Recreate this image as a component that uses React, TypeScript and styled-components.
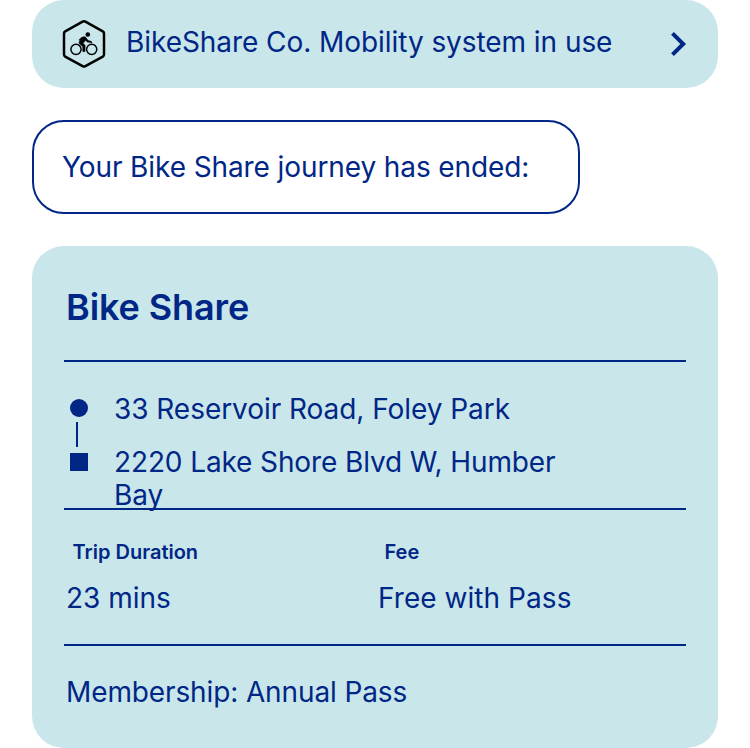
import React from "react";
import styled, { createGlobalStyle } from "styled-components";

const navy = "#002686";
const ice = "#c9e6eb";

const GlobalStyle = createGlobalStyle`
  *, *::before, *::after { box-sizing: border-box; }
  body {
    margin: 0;
    background: #fff;
    color: ${navy};
    font-family: Inter, "Liberation Sans", sans-serif;
  }
  h1, p, dl, dt, dd { margin: 0; padding: 0; }
`;

const Page = styled.main`
  display: flex;
  flex-direction: column;
  gap: 32px;
  width: 750px;
  height: 748px;
  padding: 0 32px;
  overflow: hidden;
`;

const Text = styled.p<{ $tracking?: number }>`
  font-size: 28px;
  font-weight: 400;
  line-height: 34px;
  letter-spacing: ${(p) => p.$tracking ?? 0}px;
  white-space: nowrap;
`;

const Banner = styled.header`
  display: flex;
  align-items: center;
  flex: none;
  height: 88px;
  padding: 0 31px 0 30px;
  border-radius: 32px;
  background: ${ice};
`;

const BannerText = styled(Text)`
  flex: 1;
  margin: -4px 0 0 20px;
`;

const Bubble = styled.section`
  display: flex;
  flex: none;
  width: 548px;
  height: 94px;
  padding: 28px 28px 0 28px;
  border: 2px solid ${navy};
  border-radius: 32px;
`;

const Card = styled.article`
  flex: none;
  height: 502px;
  padding: 0 32px;
  border-radius: 32px;
  background: ${ice};
`;

const CardTitle = styled.h1`
  height: 116px;
  padding: 39px 0 0 2px;
  border-bottom: 2px solid ${navy};
  font-size: 36px;
  font-weight: 600;
  line-height: 44px;
  letter-spacing: -0.1px;
`;

const Route = styled.section`
  display: flex;
  gap: 26px;
  height: 148px;
  padding: 31px 0 0 6px;
  border-bottom: 2px solid ${navy};
`;

const Markers = styled.div`
  display: flex;
  flex-direction: column;
  width: 18px;
  padding-top: 6px;
`;

const StartDot = styled.span`
  width: 18px;
  height: 18px;
  border-radius: 50%;
  background: ${navy};
`;

const Stem = styled.span`
  width: 2px;
  height: 25px;
  margin: 5px 0 6px 6px;
  background: ${navy};
`;

const EndSquare = styled.span`
  width: 18px;
  height: 18px;
  background: ${navy};
`;

const Stops = styled.div`
  display: flex;
  flex-direction: column;
  gap: 20px;
  width: 460px;
`;

const Stop = styled(Text)`
  line-height: 33px;
  white-space: normal;
`;

const Details = styled.dl`
  display: grid;
  grid-template-columns: 312px 1fr;
  height: 136px;
  padding: 30px 0 0 2px;
  border-bottom: 2px solid ${navy};
`;

const Label = styled.dt`
  padding-left: 6.5px;
  font-size: 20px;
  font-weight: 600;
  line-height: 24px;
`;

const Value = styled(Text).attrs({ as: "dd" })`
  margin-top: 17px;
`;

const Membership = styled(Text)`
  padding: 29px 0 0 2px;
`;

const BikeLogo = () => (
  <svg width="44" height="50" viewBox="62 19 44 50" fill="none" stroke="#000">
    <path
      d="M82.6 21.6 65.2 31.4Q64 32.1 64 33.5V54.5Q64 55.9 65.2 56.6L82.6 66.2Q84 67 85.4 66.2L102.8 56.6Q104 55.9 104 54.5V33.5Q104 32.1 102.8 31.4L85.4 21.6Q84 20.8 82.6 21.6Z"
      strokeWidth="2.5"
    />
    <circle cx="76" cy="49.3" r="5.1" strokeWidth="1.5" />
    <circle cx="91.7" cy="49.3" r="5.1" strokeWidth="1.5" />
    <circle cx="87.8" cy="34.5" r="2.3" fill="#000" stroke="none" />
    <path
      d="M79 39.8Q81 36.8 84 36.6 85.3 36.4 86 37.6L88 40.2 91.3 41.3Q92.5 42 91.7 43.1L87.1 42 85.6 40.6 83.2 43.2 85.2 45.2V51.3Q84 52.5 82.6 51.3V46.7L79.5 44.1Q78.2 42.8 79.5 41.2L81 39.4 79.4 40.7Z"
      fill="#000"
      stroke="#000"
      strokeWidth="0.3"
    />
  </svg>
);

const Chevron = () => (
  <svg width="16" height="26" viewBox="0 0 16 26" fill="none">
    <path d="M1.5 2.3 12.2 13 1.5 23.7" stroke={navy} strokeWidth="4" />
  </svg>
);

export default function App() {
  return (
    <>
      <GlobalStyle />
      <Page>
        <Banner>
          <BikeLogo />
          <BannerText $tracking={-0.06}>BikeShare Co. Mobility system in use</BannerText>
          <Chevron />
        </Banner>
        <Bubble>
          <Text $tracking={-0.1}>Your Bike Share journey has ended:</Text>
        </Bubble>
        <Card>
          <CardTitle>Bike Share</CardTitle>
          <Route>
            <Markers>
              <StartDot />
              <Stem />
              <EndSquare />
            </Markers>
            <Stops>
              <Stop $tracking={-0.05}>33 Reservoir Road, Foley Park</Stop>
              <Stop $tracking={-0.12}>2220 Lake Shore Blvd W, Humber Bay</Stop>
            </Stops>
          </Route>
          <Details>
            <div>
              <Label>Trip Duration</Label>
              <Value>23 mins</Value>
            </div>
            <div>
              <Label>Fee</Label>
              <Value $tracking={0.05}>Free with Pass</Value>
            </div>
          </Details>
          <Membership $tracking={-0.12}>Membership: Annual Pass</Membership>
        </Card>
      </Page>
    </>
  );
}
